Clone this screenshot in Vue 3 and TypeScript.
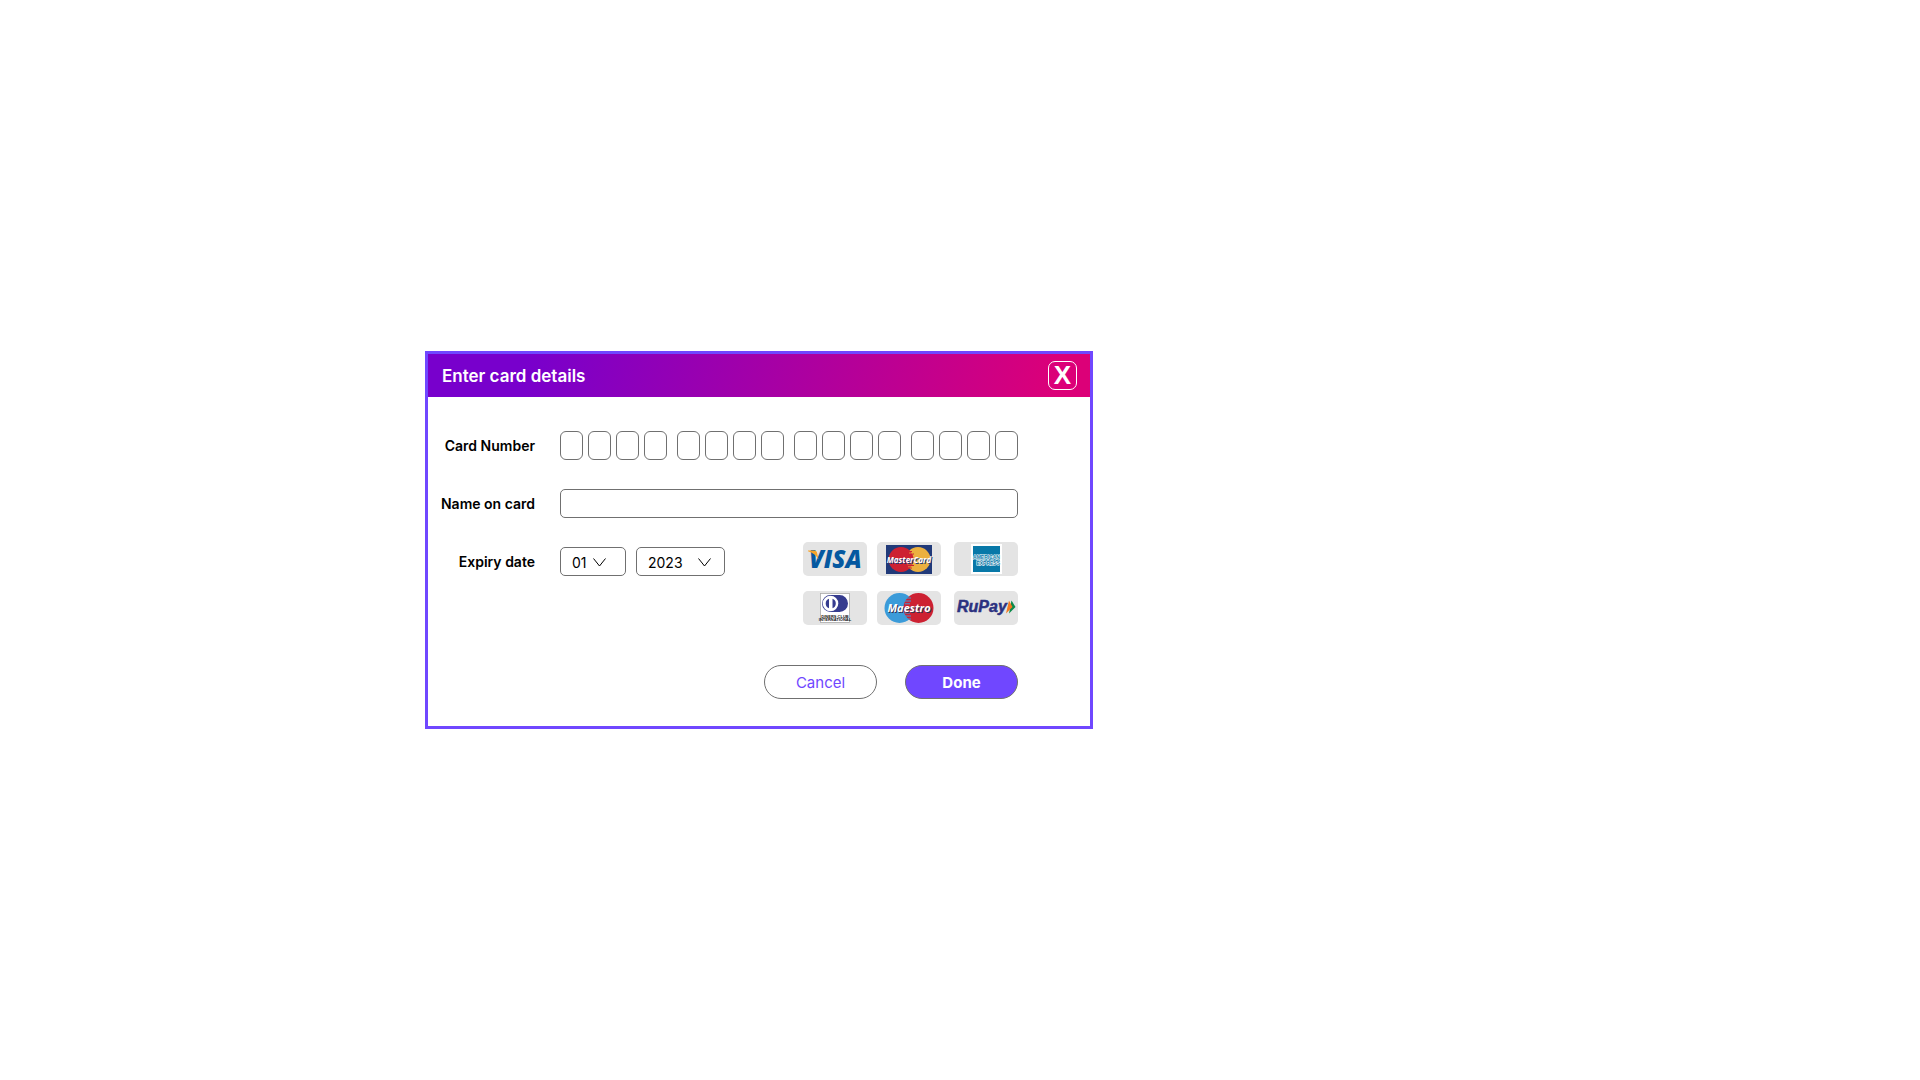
<script setup lang="ts">
import { ref } from 'vue'

const groups = [0, 1, 2, 3]
const digits = ref<string[]>(Array.from({ length: 16 }, () => ''))
const name = ref('')
const month = ref('01')
const year = ref('2023')
const months = Array.from({ length: 12 }, (_, i) => String(i + 1).padStart(2, '0'))
const years = Array.from({ length: 10 }, (_, i) => String(2023 + i))
</script>

<template>
  <main class="page">
    <form class="dialog" role="dialog" aria-labelledby="dialog-title" @submit.prevent>
      <header class="header">
        <h1 id="dialog-title" class="title">Enter card details</h1>
        <button type="button" class="close" aria-label="Close">X</button>
      </header>

      <div class="body">
        <div class="row">
          <label class="label" for="digit-0">Card Number</label>
          <div class="digits">
            <div v-for="g in groups" :key="g" class="group">
              <input
                v-for="n in 4"
                :id="`digit-${g * 4 + n - 1}`"
                :key="n"
                v-model="digits[g * 4 + n - 1]"
                class="digit"
                type="text"
                inputmode="numeric"
                maxlength="1"
                :aria-label="`Digit ${g * 4 + n}`"
              />
            </div>
          </div>
        </div>

        <div class="row">
          <label class="label" for="name">Name on card</label>
          <input id="name" v-model="name" class="name" type="text" />
        </div>

        <div class="row">
          <label class="label" for="month">Expiry date</label>
          <div class="expiry">
            <div class="picker month">
              <select id="month" v-model="month">
                <option v-for="m in months" :key="m">{{ m }}</option>
              </select>
              <svg class="chevron" viewBox="0 0 13 9" aria-hidden="true"><path d="M.5 .5 6.5 8 12.500 .5" /></svg>
            </div>
            <div class="picker year">
              <select v-model="year" aria-label="Expiry year">
                <option v-for="y in years" :key="y">{{ y }}</option>
              </select>
              <svg class="chevron" viewBox="0 0 13 9" aria-hidden="true"><path d="M.5 .5 6.5 8 12.500 .5" /></svg>
            </div>
          </div>

          <div class="brands">
            <svg class="brand" viewBox="0 0 64 34" role="img" aria-label="Visa">
              <text x="6" y="26" font-size="24" fill="#0558a0">VISA</text>
              <path d="M5 8.500h6.500q2 0 2.500 2l1.500 7Q12 11 5 9.200Z" fill="#f7a42a" />
            </svg>
            <svg class="brand" viewBox="0 0 64 34" role="img" aria-label="MasterCard">
              <rect x="9" y="3" width="46" height="29" fill="#213a79" />
              <circle cx="41" cy="17.500" r="12.500" fill="#ebb03f" />
              <circle cx="24" cy="17.500" r="12.500" fill="#cd2132" />
              <path d="M31 9.500h4M29 12h8M29 23.500h8M31 26h4" stroke="#cd2132" />
              <path d="M32 11h4M30 22h6M31 24.800h4" stroke="#ebb03f" stroke-width=".7" />
              <g class="bold" font-size="8" text-anchor="middle">
                <text x="33" y="21.500" fill="#213a79">MasterCard</text>
                <text x="32" y="21" fill="#fff">MasterCard</text>
              </g>
            </svg>
            <svg class="brand" viewBox="0 0 64 34" role="img" aria-label="American Express">
              <rect x="17" y="2" width="31" height="30" fill="#fff" />
              <rect x="19" y="4" width="27" height="26" fill="#0878a8" />
              <g class="plain" font-size="5" fill="#0878a8" stroke="#fff" stroke-width="1" paint-order="stroke">
                <text x="32.500" y="17" text-anchor="middle">AMERICAN</text>
                <text x="46" y="22.500" text-anchor="end">EXPRESS</text>
              </g>
            </svg>
            <svg class="brand" viewBox="0 0 64 34" role="img" aria-label="Diners Club International">
              <rect x="17.500" y="2.500" width="29" height="29" fill="#fff" stroke="#aaa" stroke-width=".8" />
              <path d="M27.500 4h9a8.500 8.500 0 0 1 0 17h-9a8.500 8.500 0 0 1 0-17Z" fill="#363c8f" />
              <circle cx="27.500" cy="12.500" r="7.800" fill="#fff" />
              <path d="M26 7.800a5 5 0 0 0 0 9.400ZM29.500 7.800a5 5 0 0 1 0 9.400Z" fill="#363c8f" />
              <g class="plain" font-size="4" text-anchor="middle" fill="#111">
                <text x="32" y="26.500">DINERS CLUB</text>
                <text x="32" y="30">INTERNATIONAL</text>
              </g>
            </svg>
            <svg class="brand" viewBox="0 0 64 34" role="img" aria-label="Maestro">
              <circle cx="22.500" cy="17" r="15" fill="#3b9bd9" />
              <circle cx="41.500" cy="17" r="15" fill="#cd2132" />
              <path d="M29 7h5M28 10h6M28 12.800h5M28 22h5M28 25h6M29 28h5" stroke="#3b9bd9" />
              <g class="bold" font-size="11" text-anchor="middle">
                <text x="33" y="21.500" fill="#335">Maestro</text>
                <text x="32" y="21" fill="#fff">Maestro</text>
              </g>
            </svg>
            <svg class="brand" viewBox="0 0 64 34" role="img" aria-label="RuPay">
              <text class="rupay" x="3" y="21" font-size="16" fill="#2b3180" stroke="#2b3180" stroke-width=".5">RuPay</text>
              <path d="M57.500 9.500 61.500 16 55 22.500Z" fill="#0a8a4a" />
              <path d="M55 9.500 58.500 16 52 22.500Z" fill="#f47920" />
            </svg>
          </div>
        </div>

        <div class="actions">
          <button type="button" class="btn cancel">Cancel</button>
          <button type="submit" class="btn done">Done</button>
        </div>
      </div>
    </form>
  </main>
</template>

<style>
body {
  background: #fff;
}
</style>

<style scoped>
.page {
  display: flex;
  align-items: center;
  min-height: 100vh;
  box-sizing: border-box;
  padding-left: 425px;
  font-family: Inter, 'Liberation Sans', sans-serif;
  color: #000;
}

.page * {
  box-sizing: border-box;
}

.dialog {
  width: 100%;
  max-width: 668px;
  border: 3px solid #7047ff;
  background: #fff;
}

.header {
  display: flex;
  align-items: center;
  justify-content: space-between;
  height: 43px;
  padding: 0 13px 0 14px;
  background: linear-gradient(100deg, #7800cc 15%, #dc0078 95%);
  color: #fff;
}

.title {
  margin: 0;
  font-size: 17px;
  font-weight: 600;
  line-height: 20px;
}

.close {
  width: 29px;
  height: 29px;
  padding: 0;
  border: 1px solid #fff;
  border-radius: 7px;
  background: none;
  color: #fff;
  font: bold 26px/27px 'Liberation Sans', sans-serif;
}

.body {
  display: flex;
  flex-direction: column;
  gap: 29px;
  padding: 34px 72px 27px 10px;
}

.row {
  display: flex;
  align-items: flex-start;
  gap: 25px;
}

.label {
  flex: none;
  width: 97px;
  font-size: 14px;
  font-weight: 600;
  line-height: 29px;
  text-align: right;
  white-space: nowrap;
}

.digits {
  display: flex;
  flex: 1;
  justify-content: space-between;
}

.group {
  display: flex;
  gap: 5px;
}

.digit,
.name,
.picker select {
  height: 29px;
  margin: 0;
  border: 1px solid #707070;
  border-radius: 5px;
  background: #fff;
  color: #000;
  font: 14px 'Inter', sans-serif;
}

.digit {
  width: 23px;
  padding: 0;
  border-radius: 6px;
  text-align: center;
}

.name {
  flex: 1;
  min-width: 0;
  padding: 0 10px;
}

.expiry {
  display: flex;
  gap: 10px;
}

.picker {
  display: grid;
  align-items: center;
}

.picker > * {
  grid-area: 1 / 1;
}

.picker select {
  width: 100%;
  padding: 1px 10px 0 11px;
  appearance: none;
}

.month {
  width: 66px;
}

.year {
  width: 89px;
}

.chevron {
  justify-self: end;
  width: 13px;
  height: 9px;
  margin-top: 2px;
  margin-right: 20px;
  fill: none;
  stroke: #000;
  pointer-events: none;
}

.year .chevron {
  margin-right: 14px;
}

.brands {
  display: grid;
  grid-template-columns: 74px 77px 64px;
  row-gap: 15px;
  margin: -5px 0 0 auto;
}

.brand {
  width: 64px;
  height: 34px;
  border-radius: 5px;
  background: #e4e4e4;
  font-family: 'Open Sans', sans-serif;
  font-style: italic;
  font-weight: 800;
}

.bold {
  font-weight: 700;
}

.plain {
  font-family: 'Liberation Sans', sans-serif;
  font-style: normal;
  font-weight: 700;
}

.rupay {
  font-family: 'Liberation Sans', sans-serif;
  font-weight: 700;
}

.actions {
  display: flex;
  justify-content: flex-end;
  gap: 28px;
  padding-top: 11px;
}

.btn {
  width: 113px;
  height: 34px;
  padding: 1px 0 0;
  border: 1px solid #707070;
  border-radius: 17px;
  font: 15px/20px Inter, sans-serif;
}

.cancel {
  background: #fff;
  color: #7047ff;
}

.done {
  background: #7047ff;
  color: #fff;
  font-weight: 700;
}
</style>
